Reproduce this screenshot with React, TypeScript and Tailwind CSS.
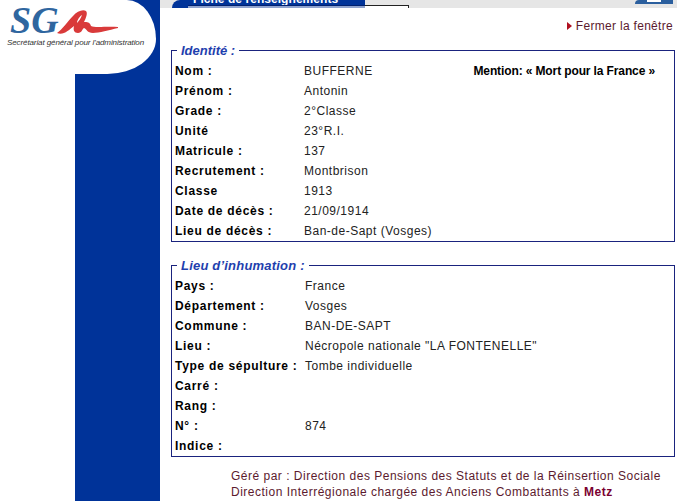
const font = "font-['Liberation_Sans',Arial,sans-serif]";

type Row = { label: string; value?: string };

const identite: Row[] = [
  { label: 'Nom :', value: 'BUFFERNE' },
  { label: 'Prénom :', value: 'Antonin' },
  { label: 'Grade :', value: '2°Classe' },
  { label: 'Unité', value: '23°R.I.' },
  { label: 'Matricule :', value: '137' },
  { label: 'Recrutement :', value: 'Montbrison' },
  { label: 'Classe', value: '1913' },
  { label: 'Date de décès :', value: '21/09/1914' },
  { label: 'Lieu de décès :', value: 'Ban-de-Sapt (Vosges)' },
];

const inhumation: Row[] = [
  { label: 'Pays :', value: 'France' },
  { label: 'Département :', value: 'Vosges' },
  { label: 'Commune :', value: 'BAN-DE-SAPT' },
  { label: 'Lieu :', value: 'Nécropole nationale "LA FONTENELLE"' },
  { label: 'Type de sépulture :', value: 'Tombe individuelle' },
  { label: 'Carré :' },
  { label: 'Rang :' },
  { label: 'N° :', value: '874' },
  { label: 'Indice :' },
];

function Rows({ rows, labelWidth }: { rows: Row[]; labelWidth: string }) {
  return (
    <div className="flex flex-col pt-[3px]">
      {rows.map((r) => (
        <div key={r.label} className="flex h-5 items-center text-xs">
          <div className={`${labelWidth} shrink-0 font-bold tracking-[0.7px] text-black`}>{r.label}</div>
          <div className="tracking-[0.5px] text-[#222]">{r.value}</div>
        </div>
      ))}
    </div>
  );
}

function Logo() {
  return (
    <div className="h-[74px] w-[156px] rounded-[0_30px_50px_0/0_40px_36px_0] bg-white pl-[10px] pt-[2px]">
      <div className="flex h-[36px] items-start">
        <span className="font-['Liberation_Serif',serif] text-[38px] font-bold italic leading-[36px] text-[#2f669f]">SG</span>
        <svg width="62" height="28" viewBox="0 0 62 28" className="mt-[7px] -ml-[2px]">
          <path
            d="M0 24 C5 21 11 12 16 7 C20 2 26 0 29 2 C31 4 29 9 27 13 C30 13 33 13 34 17 C38 19 50 17 61 18 L61 19 C52 21 42 24 36 24 C30 24 30 20 27 19 C25 20 25 24 21 24 C17 24 16 21 17 17 C12 21 6 27 0 24 Z M20 14 C22 12 24 9 25 6 C23 7 20 11 20 14 Z"
            fill="#d93a3a"
            fillRule="evenodd"
          />
        </svg>
      </div>
      <div className="-mt-[1px] -ml-[3px] whitespace-nowrap text-[8px] leading-[12px] tracking-[-0.1px] text-[#333] italic">
        Secrétariat général pour l'administration
      </div>
    </div>
  );
}

export default function App() {
  return (
    <div className={`${font} flex min-h-[501px] w-[677px] overflow-hidden bg-white`}>
      <div className="flex w-[160px] shrink-0 flex-col">
        <div className="bg-[#003399]">
          <Logo />
        </div>
        <div className="ml-[75px] flex-1 bg-[#003399]" />
      </div>

      <div className="flex-1">
        <div className="flex h-2 items-start justify-between bg-[#e6e6e6]">
          <div className="ml-3 flex h-2 items-end overflow-hidden">
            <div className="flex h-2 w-[193px] flex-col overflow-hidden rounded-tl-[8px] bg-[#003399]">
              <div className="-mt-[7px] h-[12px] shrink-0 whitespace-nowrap pl-[21px] text-xs leading-[12px] font-bold tracking-[0.05px] text-white">
                Fiche de renseignements
              </div>
              <div className="ml-[16px] h-[3px] shrink-0 border-t border-[#00206f] bg-[#8fa3cf]" />
            </div>
            <div className="h-[3px] w-[44px] border-t border-r border-[#222] bg-white" />
          </div>
          <div className="mr-[4px] flex h-1 w-[38px] justify-center rounded-tl-[4px] bg-[#2b5f9e]">
            <div className="h-[2px] w-[14px] bg-white" />
          </div>
        </div>

        <div className="flex h-[34px] items-center justify-end pr-[4px] pt-[2px] text-xs tracking-[0.3px] text-[#5c1a2e]">
          <span className="mr-[4px] inline-block border-y-[4px] border-l-[5px] border-y-transparent border-l-[#b01020]" />
          Fermer la fenêtre
        </div>

        <div className="ml-[11px] mr-[2px]">
          <fieldset className="relative border border-[#1a237e] pl-[3px]">
            <legend className="relative top-[1px] ml-[2px] px-[4px] text-[13px] leading-[16px] font-bold italic text-[#1f3fae]">
              Identité :
            </legend>
            <Rows rows={identite} labelWidth="w-[129px]" />
            <div className="absolute right-[19px] top-[5px] text-xs font-bold tracking-[-0.12px] text-black">
              Mention: « Mort pour la France »
            </div>
          </fieldset>

          <fieldset className="mt-[15px] border border-[#1a237e] pl-[3px]">
            <legend className="relative top-[1px] ml-[2px] px-[4px] text-[13px] leading-[16px] font-bold italic tracking-[0.2px] text-[#1f3fae]">
              Lieu d’inhumation :
            </legend>
            <Rows rows={inhumation} labelWidth="w-[130px]" />
          </fieldset>
        </div>

        <div className="mt-[11px] ml-[71px] text-xs leading-[16px] tracking-[0.5px] text-[#5c1a2e]">
          <div className="whitespace-nowrap">Géré par : Direction des Pensions des Statuts et de la Réinsertion Sociale</div>
          <div className="whitespace-nowrap">
            Direction Interrégionale chargée des Anciens Combattants à <b className="text-[#7a0030]">Metz</b>
          </div>
        </div>
      </div>
    </div>
  );
}
